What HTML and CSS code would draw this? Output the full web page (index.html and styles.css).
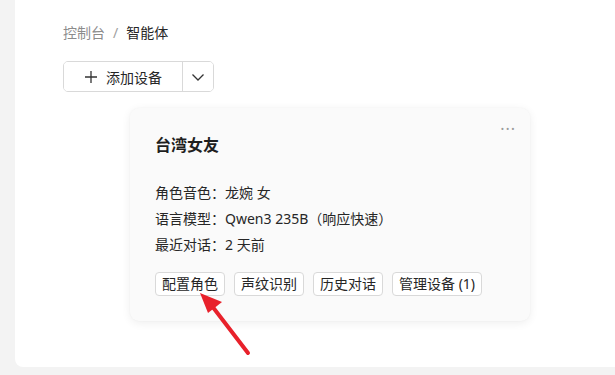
FILE: index.html
```html
<!DOCTYPE html>
<html lang="zh-CN">
<head>
<meta charset="utf-8">
<link rel="stylesheet" href="styles.css">
</head>
<body>
<div class="gutter"></div>
<main class="panel">
  <nav class="crumbs">
    <span class="crumb-link">控制台</span>
    <span class="crumb-sep">/</span>
    <span class="crumb-cur">智能体</span>
  </nav>
  <div class="btn-group">
    <button class="btn-main">
      <svg class="plus" width="14" height="14" viewBox="0 0 14 14"><path d="M7 1v12M1 7h12" stroke="#333" stroke-width="1.3" fill="none"/></svg>
      <span>添加设备</span>
    </button>
    <button class="btn-drop">
      <svg width="14" height="14" viewBox="0 0 14 14"><path d="M1.5 4.5L7 10l5.5-5.5" stroke="#333" stroke-width="1.3" fill="none"/></svg>
    </button>
  </div>
  <section class="card">
    <div class="more">···</div>
    <h2 class="title">台湾女友</h2>
    <ul class="info">
      <li>角色音色：龙婉 女</li>
      <li>语言模型：Qwen3 235B（响应快速）</li>
      <li>最近对话：2 天前</li>
    </ul>
    <div class="actions">
      <button class="act">配置角色</button>
      <button class="act">声纹识别</button>
      <button class="act">历史对话</button>
      <button class="act">管理设备 (1)</button>
    </div>
    <svg class="arrow" width="70" height="80" viewBox="0 0 70 80">
      <path d="M52 71L16 24" stroke="#e8212b" stroke-width="4" stroke-linecap="round" fill="none"/>
      <path d="M4 11L26 20L12 31Z" fill="#e8212b"/>
    </svg>
  </section>
</main>
</body>
</html>
```

FILE: styles.css
```css
* { box-sizing: border-box; }
html, body { margin: 0; padding: 0; }
body {
  width: 615px;
  height: 375px;
  background: #f3f3f3;
  display: flex;
  align-items: flex-start;
  font-family: "Noto Sans", "Noto Sans CJK SC", sans-serif;
  color: #1f1f1f;
  overflow: hidden;
}
.gutter { width: 15px; flex: none; }
.panel {
  flex: 1;
  height: 367px;
  background: #fff;
  border-bottom-left-radius: 8px;
  padding: 22px 0 0 48px;
  position: relative;
}
.crumbs {
  display: flex;
  gap: 8px;
  font-size: 14px;
  line-height: 22px;
}
.crumb-link { color: #8c8c8c; }
.crumb-sep { color: #a0a0a0; }
.crumb-cur { color: #262626; }
.btn-group {
  margin-top: 17px;
  display: flex;
  width: 151px;
  height: 31px;
  border: 1px solid #d9d9d9;
  border-radius: 5px;
  overflow: hidden;
}
.btn-group button {
  background: #fff;
  border: 0;
  padding: 0;
  font-family: inherit;
  font-size: 14px;
  color: #262626;
  display: flex;
  align-items: center;
  justify-content: center;
}
.btn-main { width: 119px; gap: 8px; border-right: 1px solid #d9d9d9 !important; }
.btn-drop { flex: 1; }
.card {
  position: relative;
  margin: 16px 0 0 67px;
  width: 400px;
  height: 213px;
  background: #fafafa;
  border-radius: 9px;
  box-shadow: 0 2px 10px rgba(0,0,0,0.07), 0 0 2px rgba(0,0,0,0.04);
  padding: 24px 24px 0 25px;
}
.more {
  position: absolute;
  right: 14px;
  top: 10px;
  color: #9a9a9a;
  font-size: 16px;
  letter-spacing: 1px;
}
.title {
  margin: 0;
  font-size: 16px;
  font-weight: 600;
  line-height: 26px;
  color: #1f1f1f;
}
.info {
  list-style: none;
  margin: 22px 0 0;
  padding: 0;
  font-size: 14px;
  line-height: 26px;
  color: #262626;
}
.actions {
  margin-top: 14px;
  display: flex;
  gap: 9px;
}
.act {
  height: 24px;
  padding: 0 6px;
  border: 1px solid #d9d9d9;
  border-radius: 4px;
  background: #fff;
  font-family: inherit;
  font-size: 14px;
  line-height: 22px;
  color: #262626;
}
.arrow {
  position: absolute;
  left: 66px;
  top: 174px;
}
```
